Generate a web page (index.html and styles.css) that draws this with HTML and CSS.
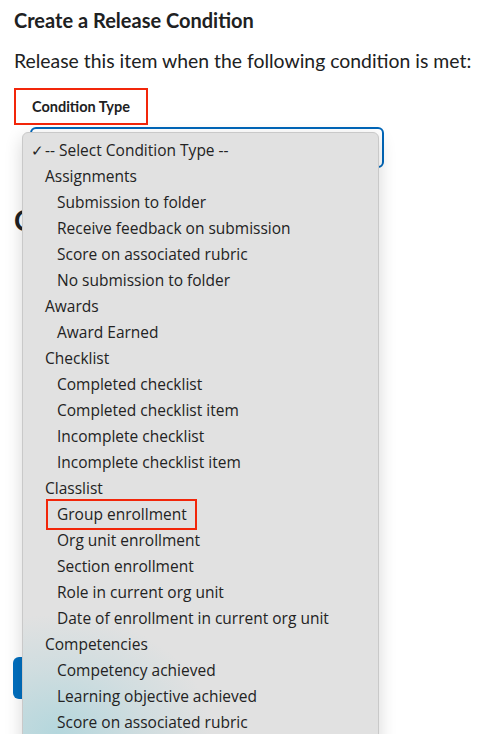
FILE: index.html
```html
<!DOCTYPE html>
<html>
<head>
<meta charset="utf-8">
<link rel="stylesheet" href="styles.css">
</head>
<body>
<div class="page">
  <h1 class="title">Create a Release Condition</h1>
  <p class="intro">Release this item when the following condition is met:</p>
  <div class="label-box"><span class="label">Condition Type</span></div>
  <div class="field">
    <div class="select"></div>
    <div class="menu">
      <div class="glow"></div>
      <div class="opt selected"><span class="check">✓</span>-- Select Condition Type --</div>
      <div class="opt grp">Assignments</div>
      <div class="opt sub">Submission to folder</div>
      <div class="opt sub">Receive feedback on submission</div>
      <div class="opt sub">Score on associated rubric</div>
      <div class="opt sub">No submission to folder</div>
      <div class="opt grp">Awards</div>
      <div class="opt sub">Award Earned</div>
      <div class="opt grp">Checklist</div>
      <div class="opt sub">Completed checklist</div>
      <div class="opt sub">Completed checklist item</div>
      <div class="opt sub">Incomplete checklist</div>
      <div class="opt sub">Incomplete checklist item</div>
      <div class="opt grp">Classlist</div>
      <div class="opt sub hl-row"><span class="hl">Group enrollment</span></div>
      <div class="opt sub">Org unit enrollment</div>
      <div class="opt sub">Section enrollment</div>
      <div class="opt sub">Role in current org unit</div>
      <div class="opt sub">Date of enrollment in current org unit</div>
      <div class="opt grp">Competencies</div>
      <div class="opt sub">Competency achieved</div>
      <div class="opt sub">Learning objective achieved</div>
      <div class="opt sub">Score on associated rubric</div>
    </div>
  </div>
  <h2 class="hidden-heading">Current Conditions</h2>
  <button class="btn">Create</button>
</div>
</body>
</html>
```

FILE: styles.css
```css
html, body {
  margin: 0;
  padding: 0;
  background: #ffffff;
  overflow: hidden;
}
.page {
  font-family: Lato, "Noto Sans", sans-serif;
  color: #202122;
  padding: 8px 0 0 14px;
  width: 482px;
  height: 734px;
  box-sizing: border-box;
  position: relative;
}
.title {
  margin: 0;
  font-size: 20px;
  font-weight: 700;
  line-height: 24px;
}
.intro {
  margin: 17px 0 0 0;
  font-size: 19.4px;
  line-height: 24px;
  white-space: nowrap;
}
.label-box {
  margin-top: 15px;
  width: 134px;
  height: 37px;
  box-sizing: border-box;
  border: 2px solid #f2260a;
  display: flex;
  align-items: center;
  padding-left: 16px;
  padding-bottom: 1px;
}
.label {
  font-size: 14.5px;
  font-weight: 700;
  color: #202122;
}
.field {
  position: relative;
  margin-top: 2px;
  height: 42px;
}
.select {
  margin-left: 16px;
  width: 354px;
  height: 41px;
  box-sizing: border-box;
  border: 2px solid #0066b8;
  border-radius: 6px;
}
.menu {
  position: absolute;
  left: 8px;
  top: 5px;
  width: 357px;
  height: 620px;
  box-sizing: border-box;
  background: #e1e1e1;
  border: 1px solid #c9c9c9;
  border-radius: 6px;
  box-shadow: 0 6px 18px rgba(0, 0, 0, 0.16);
  padding-top: 4px;
  overflow: hidden;
  z-index: 2;
  font-family: "Open Sans", "Noto Sans", sans-serif;
}
.opt {
  height: 26px;
  line-height: 26px;
  font-size: 15.5px;
  color: #232323;
  white-space: nowrap;
  position: relative;
  z-index: 1;
}
.opt.selected {
  padding-left: 22px;
}
.check {
  position: absolute;
  left: 8px;
  font-size: 15px;
}
.opt.grp {
  padding-left: 22px;
}
.opt.sub {
  padding-left: 34px;
}
.hl-row::after {
  content: "";
  position: absolute;
  left: 23px;
  top: -2px;
  width: 151px;
  height: 31px;
  box-sizing: border-box;
  border: 2px solid #f2260a;
}
.glow {
  position: absolute;
  left: -70px;
  top: 480px;
  width: 260px;
  height: 220px;
  background: radial-gradient(ellipse at 40% 55%, rgba(150, 208, 218, 0.6) 0%, rgba(170, 212, 220, 0.3) 40%, rgba(225, 225, 225, 0) 70%);
  pointer-events: none;
  z-index: 0;
}
.hidden-heading {
  margin: 34px 0 0 0;
  font-size: 28px;
  font-weight: 700;
  line-height: 34px;
  position: relative;
  z-index: 1;
}
.btn {
  margin-top: 420px;
  display: block;
  width: 90px;
  height: 42px;
  margin-left: -1px;
  background: #006fbf;
  border: none;
  border-radius: 6px;
  color: #fff;
  font-family: Lato, sans-serif;
  font-weight: 700;
  font-size: 15px;
}
```
